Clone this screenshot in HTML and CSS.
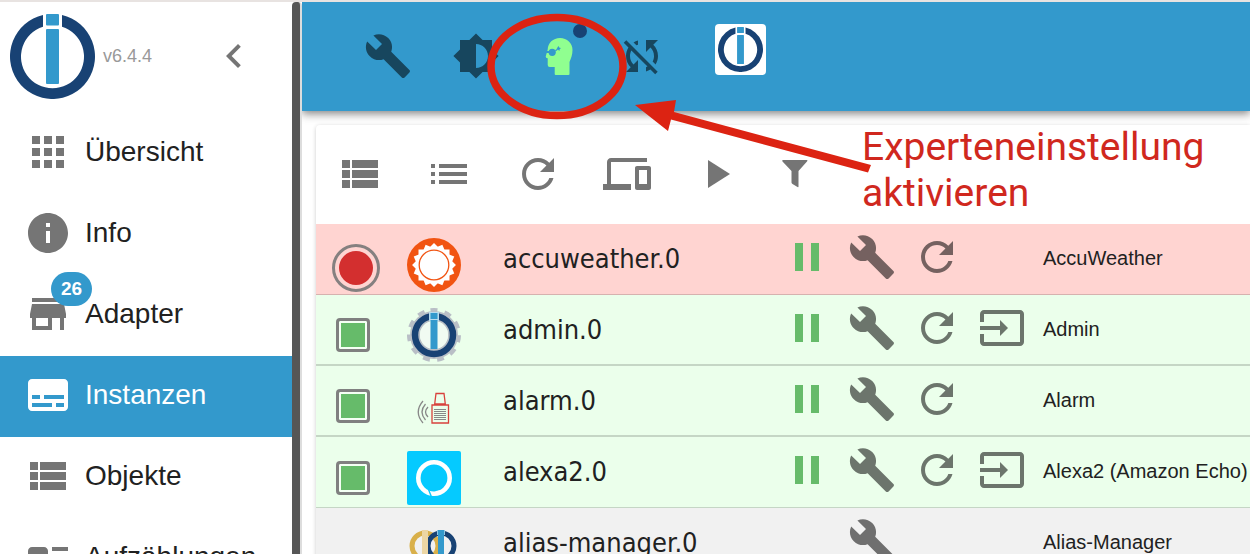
FILE: index.html
```html
<!DOCTYPE html>
<html lang="de">

<head>
    <meta charset="UTF-8">
    <meta name="viewport" content="width=device-width, initial-scale=1.0">
    <title>Instanzen - ioBroker</title>
    <link rel="stylesheet" href="styles.css">
</head>

<body>
    <!-- shared icons -->
    <svg class="sprite" aria-hidden="true">
        <symbol id="wrench" viewBox="0 0 24 24">
            <path d="M22.7 19l-9.1-9.1c.9-2.3.4-5-1.5-6.9-2-2-5-2.4-7.4-1.3L9 6 6 9 1.6 4.7C.4 7.1.9 10.1 2.9 12.1c1.9 1.9 4.6 2.4 6.9 1.5l9.1 9.1c.4.4 1 .4 1.4 0l2.3-2.3c.5-.4.5-1.1.1-1.4z" />
        </symbol>
        <symbol id="refresh" viewBox="0 0 24 24">
            <path d="M17.65 6.35C16.2 4.9 14.21 4 12 4c-4.42 0-7.99 3.58-7.99 8s3.57 8 7.99 8c3.73 0 6.84-2.55 7.73-6h-2.08c-.82 2.33-3.04 4-5.65 4-3.31 0-6-2.69-6-6s2.69-6 6-6c1.66 0 3.14.69 4.22 1.78L13 11h7V4l-2.35 2.35z" />
        </symbol>
        <symbol id="pause" viewBox="0 0 24 24">
            <path d="M6 19h4V5H6v14zm8-14v14h4V5h-4z" />
        </symbol>
        <symbol id="input" viewBox="0 0 24 24">
            <path d="M21 3.01H3c-1.1 0-2 .9-2 2V9h2V4.99h18v14.03H3V15H1v4.01c0 1.1.9 1.98 2 1.98h18c1.1 0 2-.88 2-1.98v-14c0-1.11-.9-2-2-2zM11 16l4-4-4-4v3H1v2h10v3z" />
        </symbol>
        <symbol id="view-list" viewBox="0 0 24 24">
            <path d="M3 14h4v-4H3v4zm0 5h4v-4H3v4zM3 9h4V5H3v4zm5 5h13v-4H8v4zm0 5h13v-4H8v4zM8 5v4h13V5H8z" />
        </symbol>
        <symbol id="iobroker" viewBox="0 0 85 85">
            <path fill="#184274" fill-rule="evenodd" d="M33 1.1A42.5 42.5 0 1 0 52 1.1V12.700A31.500 31.500 0 1 1 33 12.700z" />
            <rect fill="#3399cc" x="36" y="0" width="13" height="11.500" rx="1" />
            <rect fill="#3399cc" x="36" y="15" width="13" height="55" rx="1" />
        </symbol>
    </svg>

    <div class="browser-edge"></div>
    <div class="app">
        <nav class="sidebar">
            <div class="sidebar-header">
                <svg class="logo"><use href="#iobroker" /></svg>
                <span class="version">v6.4.4</span>
                <button class="icon-button collapse" aria-label="Menü einklappen">
                    <svg class="icon" viewBox="0 0 24 24"><path d="M15.41 7.41L14 6l-6 6 6 6 1.41-1.41L10.83 12z" /></svg>
                </button>
            </div>
            <a class="nav-item" href="#overview">
                <svg class="icon" viewBox="0 0 24 24"><path d="M4 8h4V4H4v4zm6 12h4v-4h-4v4zm-6 0h4v-4H4v4zm0-6h4v-4H4v4zm6 0h4v-4h-4v4zm6-10v4h4V4h-4zm-6 4h4V4h-4v4zm6 6h4v-4h-4v4zm0 6h4v-4h-4v4z" /></svg>
                Übersicht
            </a>
            <a class="nav-item" href="#info">
                <svg class="icon" viewBox="0 0 24 24"><path d="M12 2C6.480 2 2 6.480 2 12s4.480 10 10 10 10-4.480 10-10S17.520 2 12 2zm1 15h-2v-6h2v6zm0-8h-2V7h2v2z" /></svg>
                Info
            </a>
            <a class="nav-item" href="#adapter">
                <span class="badge">26</span>
                <svg class="icon" viewBox="0 0 24 24"><path d="M20 4H4v2h16V4zm1 10v-2l-1-5H4l-1 5v2h1v6h10v-6h4v6h2v-6h1zm-9 4H6v-4h6v4z" /></svg>
                Adapter
            </a>
            <a class="nav-item active" href="#instances">
                <svg class="icon" viewBox="0 0 24 24"><path d="M20 4H4c-1.1 0-2 .9-2 2v12c0 1.1.9 2 2 2h16c1.1 0 2-.9 2-2V6c0-1.1-.9-2-2-2zM4 12h4v2H4v-2zm10 6H4v-2h10v2zm6 0h-4v-2h4v2zm0-4H10v-2h10v2z" /></svg>
                Instanzen
            </a>
            <a class="nav-item" href="#objects">
                <svg class="icon"><use href="#view-list" /></svg>
                Objekte
            </a>
            <a class="nav-item" href="#enums">
                <svg class="icon" viewBox="0 0 24 24"><path d="M22 13h-8v-2h8v2zm0-6h-8v2h8V7zm-8 10h8v-2h-8v2zm-2-8v6c0 1.1-.9 2-2 2H4c-1.1 0-2-.9-2-2V9c0-1.1.9-2 2-2h6c1.1 0 2 .9 2 2zm-1.500 6l-2.250-3-1.750 2.260-1.250-1.510L3.500 15h7z" /></svg>
                Aufzählungen
            </a>
        </nav>
        <div class="divider"></div>

        <main class="content">
            <header class="appbar">
                <button class="icon-button" aria-label="Systemeinstellungen"><svg class="icon"><use href="#wrench" /></svg></button>
                <button class="icon-button" aria-label="Farbschema">
                    <svg class="icon" viewBox="0 0 24 24"><path d="M20 15.310L23.310 12 20 8.690V4h-4.690L12 .69 8.690 4H4v4.690L.69 12 4 15.310V20h4.690L12 23.310 15.310 20H20v-4.690zM12 18V6c3.310 0 6 2.690 6 6s-2.690 6-6 6z" /></svg>
                </button>
                <button class="icon-button expert" aria-label="Expertenmodus">
                    <svg class="icon" viewBox="0 0 48 48">
                        <path d="M25 6C18 6 12.900 11 12.700 17.500L10.700 24.500q-.2 1.500 2 1.800V33q0 2 2 2h5v7q0 1 1 1h12.800q1 0 1-1V30C36 26.500 37.500 23 37.500 18 37.500 11 32 6 25 6z" />
                        <circle fill="#3399cc" cx="17.200" cy="20.300" r="3.600" />
                        <path fill="#3399cc" d="M11.500 19h3v2h-3.500zM20 18.300l2-1.500.8 1-2 1.500zM22.300 15.700l1.100-1.700 1.100 1.700 1.500.4-1.300 1.200-.4 1.700-1.400-1.400-1.300-.5z" />
                    </svg>
                    <span class="dot"></span>
                </button>
                <button class="icon-button" aria-label="Synchronisierung aus">
                    <svg class="icon" viewBox="0 0 24 24"><path d="M10 6.350V4.260c-.8.21-1.550.54-2.230.96l1.460 1.460c.25-.12.5-.24.77-.33zm-7.140-.94l2.360 2.360C4.450 8.990 4 10.440 4 12c0 2.210.91 4.200 2.360 5.640L4 20h6v-6l-2.240 2.240C6.680 15.150 6 13.660 6 12c0-1 .25-1.940.68-2.770l8.080 8.080c-.25.13-.5.25-.77.34v2.090c.8-.21 1.550-.54 2.230-.96l2.360 2.360 1.270-1.270L4.140 4.140 2.860 5.410zM20 4h-6v6l2.240-2.240C17.320 8.850 18 10.340 18 12c0 1-.25 1.940-.68 2.770l1.460 1.460C19.550 15.010 20 13.560 20 12c0-2.210-.91-4.200-2.360-5.640L20 4z" /></svg>
                </button>
                <a class="host" href="#host" aria-label="Host"><svg><use href="#iobroker" /></svg></a>
            </header>

            <section class="card">
                <div class="toolbar">
                    <button class="icon-button" aria-label="Gruppiert"><svg class="icon"><use href="#view-list" /></svg></button>
                    <button class="icon-button" aria-label="Liste">
                        <svg class="icon" viewBox="0 0 24 24"><path d="M3 13h2v-2H3v2zm0 4h2v-2H3v2zm0-8h2V7H3v2zm4 4h14v-2H7v2zm0 4h14v-2H7v2zM7 7v2h14V7H7z" /></svg>
                    </button>
                    <button class="icon-button" aria-label="Neu laden"><svg class="icon"><use href="#refresh" /></svg></button>
                    <button class="icon-button" aria-label="Hosts">
                        <svg class="icon" viewBox="0 0 24 24"><path d="M4 6h18V4H4c-1.1 0-2 .9-2 2v11H0v3h14v-3H4V6zm19 2h-6c-.55 0-1 .45-1 1v10c0 .55.45 1 1 1h6c.55 0 1-.45 1-1V9c0-.55-.45-1-1-1zm-1 9h-4v-7h4v7z" /></svg>
                    </button>
                    <button class="icon-button" aria-label="Nur laufende">
                        <svg class="icon" viewBox="0 0 24 24"><path d="M8 5v14l11-7z" /></svg>
                    </button>
                    <button class="icon-button filter" aria-label="Filter">
                        <svg class="icon" viewBox="0 0 28 48"><path d="M2 10h24q1 0 0 1.500L17.500 21v15.500q0 1-1 .5L11.500 34q-1-.6-1-1.500V21L1.500 11.500Q.5 10 2 10z" /></svg>
                    </button>
                </div>

                <table class="instances">
                    <colgroup>
                        <col class="col-status">
                        <col class="col-icon">
                        <col class="col-name">
                        <col class="col-actions">
                        <col>
                    </colgroup>
                    <tbody>
                        <tr class="stopped">
                            <td class="status"><span class="state-circle"></span></td>
                            <td class="adapter-icon">
                                <svg viewBox="0 0 54 54">
                                    <circle cx="27" cy="27" r="27" fill="#f15412" />
                                    <g fill="#fff">
                                        <rect x="11.500" y="11.500" width="31" height="31" />
                                        <rect x="11.500" y="11.500" width="31" height="31" transform="rotate(22.500 27 27)" />
                                        <rect x="11.500" y="11.500" width="31" height="31" transform="rotate(45 27 27)" />
                                        <rect x="11.500" y="11.500" width="31" height="31" transform="rotate(67.500 27 27)" />
                                    </g>
                                    <circle cx="27" cy="27" r="14.800" fill="#fff" stroke="#f15412" stroke-width="1.300" />
                                </svg>
                            </td>
                            <td class="name">accuweather.0</td>
                            <td>
                                <div class="actions">
                                    <button class="icon-button run" aria-label="Anhalten"><svg class="icon"><use href="#pause" /></svg></button>
                                    <button class="icon-button" aria-label="Einstellungen"><svg class="icon"><use href="#wrench" /></svg></button>
                                    <button class="icon-button" aria-label="Neustart"><svg class="icon"><use href="#refresh" /></svg></button>
                                </div>
                            </td>
                            <td class="title">AccuWeather</td>
                        </tr>
                        <tr class="running thick">
                            <td class="status"><span class="state-square"></span></td>
                            <td class="adapter-icon">
                                <svg viewBox="0 0 54 54">
                                    <g fill="none">
                                        <circle cx="27" cy="27" r="24" stroke="#b9bfc6" stroke-width="6" stroke-dasharray="6.700 7.010" transform="rotate(-98 27 27)" />
                                        <circle cx="27" cy="27" r="19" stroke="#b9bfc6" stroke-width="10" />
                                        <circle cx="27" cy="27" r="19" stroke="#184274" stroke-width="6.500" />
                                    </g>
                                    <circle cx="27" cy="27" r="14" fill="#f1fbf2" />
                                    <rect x="22" y="4" width="10" height="9" fill="#b9dcee" />
                                    <rect x="23.500" y="5" width="7" height="6" fill="#3399cc" />
                                    <rect x="23.500" y="12" width="7" height="29" fill="#3399cc" />
                                </svg>
                            </td>
                            <td class="name">admin.0</td>
                            <td>
                                <div class="actions">
                                    <button class="icon-button run" aria-label="Anhalten"><svg class="icon"><use href="#pause" /></svg></button>
                                    <button class="icon-button" aria-label="Einstellungen"><svg class="icon"><use href="#wrench" /></svg></button>
                                    <button class="icon-button" aria-label="Neustart"><svg class="icon"><use href="#refresh" /></svg></button>
                                    <button class="icon-button" aria-label="Öffnen"><svg class="icon"><use href="#input" /></svg></button>
                                </div>
                            </td>
                            <td class="title">Admin</td>
                        </tr>
                        <tr class="running thick">
                            <td class="status"><span class="state-square"></span></td>
                            <td class="adapter-icon">
                                <svg viewBox="0 0 54 54">
                                    <g fill="none" stroke="#888" stroke-width="1.300">
                                        <path d="M16 22q-9.500 11 0 22M18.500 25q-7 8 0 16M21 28q-5 5 0 10" />
                                        <path stroke-width="1" d="M27 30.500h12M27 32.500h12M27 34.500h12M27 36.500h12M27 38.500h12M27 40.500h12" />
                                    </g>
                                    <path fill="none" stroke="#d8423c" stroke-width="1.300" d="M29 14.500h8l1.300 10.500h-10.600zM25 26h16.500v18H25z" />
                                </svg>
                            </td>
                            <td class="name">alarm.0</td>
                            <td>
                                <div class="actions">
                                    <button class="icon-button run" aria-label="Anhalten"><svg class="icon"><use href="#pause" /></svg></button>
                                    <button class="icon-button" aria-label="Einstellungen"><svg class="icon"><use href="#wrench" /></svg></button>
                                    <button class="icon-button" aria-label="Neustart"><svg class="icon"><use href="#refresh" /></svg></button>
                                </div>
                            </td>
                            <td class="title">Alarm</td>
                        </tr>
                        <tr class="running">
                            <td class="status"><span class="state-square"></span></td>
                            <td class="adapter-icon">
                                <svg viewBox="0 0 54 54">
                                    <rect width="54" height="54" rx="2" fill="#05caff" />
                                    <circle cx="27" cy="27" r="15.700" fill="none" stroke="#fff" stroke-width="4.600" />
                                    <path fill="#fff" d="M25 45l4-5 7-1.500-3 4.500z" />
                                    <path fill="#05caff" d="M22.500 39l2.500 6.500h-1.500L21 39z" />
                                </svg>
                            </td>
                            <td class="name">alexa2.0</td>
                            <td>
                                <div class="actions">
                                    <button class="icon-button run" aria-label="Anhalten"><svg class="icon"><use href="#pause" /></svg></button>
                                    <button class="icon-button" aria-label="Einstellungen"><svg class="icon"><use href="#wrench" /></svg></button>
                                    <button class="icon-button" aria-label="Neustart"><svg class="icon"><use href="#refresh" /></svg></button>
                                    <button class="icon-button" aria-label="Öffnen"><svg class="icon"><use href="#input" /></svg></button>
                                </div>
                            </td>
                            <td class="title">Alexa2 (Amazon Echo)</td>
                        </tr>
                        <tr class="disabled">
                            <td class="status"></td>
                            <td class="adapter-icon">
                                <svg viewBox="0 0 54 54">
                                    <g fill="none" stroke-width="5">
                                        <circle cx="18" cy="24" r="13" stroke="#d9b04a" />
                                        <circle cx="34" cy="24" r="13" stroke="#184274" />
                                    </g>
                                    <rect x="15" y="8" width="6" height="28" fill="#ecd6a4" />
                                    <rect x="30" y="8" width="8" height="5" fill="#8fc6e4" />
                                    <rect x="31" y="8" width="6" height="28" fill="#3399cc" />
                                </svg>
                            </td>
                            <td class="name">alias-manager.0</td>
                            <td>
                                <div class="actions">
                                    <span class="no-action"></span>
                                    <button class="icon-button" aria-label="Einstellungen"><svg class="icon"><use href="#wrench" /></svg></button>
                                </div>
                            </td>
                            <td class="title">Alias-Manager</td>
                        </tr>
                    </tbody>
                </table>
            </section>
        </main>
    </div>

    <!-- hint for the expert mode button -->
    <svg class="pointer" width="900" height="200" aria-hidden="true">
        <ellipse cx="557" cy="66.500" rx="66" ry="49" fill="none" stroke="#dc2312" stroke-width="7.500" />
        <path fill="#dc2312" d="M635 105L676 100 674 112 871 165 868 172.500 671 119.500 668 131z" />
    </svg>
    <p class="hint">Experteneinstellung<br>aktivieren</p>
</body>

</html>
```
FILE: styles.css
```css
* {
    box-sizing: border-box;
}

body {
    margin: 0;
    height: 100vh;
    overflow: hidden;
    display: flex;
    flex-direction: column;
    position: relative;
    background: #fff;
    color: #212121;
    font-family: "Liberation Sans", Arial, sans-serif;
}

.sprite {
    display: none;
}

.browser-edge {
    flex: none;
    height: 2px;
    background: #e8e3e1;
}

.app {
    flex: 1;
    min-height: 0;
    display: flex;
}

.icon {
    display: block;
    flex: none;
    width: 48px;
    height: 48px;
    fill: currentColor;
}

.icon-button {
    position: relative;
    padding: 0;
    border: none;
    background: none;
    color: rgba(0, 0, 0, 0.54);
    cursor: pointer;
}

/* sidebar */
.sidebar {
    flex: none;
    width: 292px;
    overflow: hidden;
}

.sidebar-header {
    display: flex;
    align-items: center;
    height: 111px;
    padding: 0 34px 3px 10px;
}

.logo {
    width: 85px;
    height: 85px;
}

.version {
    margin-left: 8px;
    font-size: 18px;
    color: #999;
}

.collapse {
    margin-left: auto;
}

.nav-item {
    position: relative;
    display: flex;
    align-items: center;
    gap: 13px;
    height: 81px;
    padding: 0 24px 4px;
    font-size: 28px;
    color: #212121;
    text-decoration: none;
}

.nav-item .icon {
    color: #757575;
}

.nav-item.active {
    background: #3399cc;
    color: #fff;
}

.nav-item.active .icon {
    color: #fff;
}

.badge {
    position: absolute;
    left: 51px;
    top: -3px;
    padding: 0 10px;
    border-radius: 17px;
    background: #3399cc;
    color: #fff;
    font-size: 19px;
    font-weight: bold;
    line-height: 34px;
}

.divider {
    flex: none;
    width: 10px;
    border-right: 2px solid #ddd;
    border-radius: 4px 4px 0 0;
    background: #565656;
}

/* content */
.content {
    flex: 1;
    min-width: 0;
    overflow: hidden;
}

.appbar {
    display: flex;
    align-items: center;
    gap: 40px;
    height: 109px;
    padding: 0 62px 1px;
    background: #3399cc;
    box-shadow: 0 2px 8px rgba(0, 0, 0, 0.4), 0 4px 10px rgba(0, 0, 0, 0.15);
}

.expert {
    margin: 0 -5px;
    color: #90ff90;
}

.dot {
    position: absolute;
    top: -8px;
    right: -4px;
    width: 14px;
    height: 14px;
    border-radius: 50%;
    background: #184274;
}

.host {
    margin: 0 0 14px 9px;
    padding: 3px;
    border-radius: 4px;
    background: #fff;
}

.host svg {
    display: block;
    width: 45px;
    height: 45px;
}

.card {
    margin: 14px 0 0 14px;
    border-radius: 4px 0 0 0;
    background: #fff;
    box-shadow: 0 1px 4px rgba(0, 0, 0, 0.2);
}

.toolbar {
    display: flex;
    align-items: center;
    gap: 41px;
    height: 99px;
    padding: 0 20px 1px;
}

.filter .icon {
    width: 28px;
}

.instances {
    width: 100%;
    table-layout: fixed;
    border-spacing: 0;
}

.col-status {
    width: 91px;
}

.col-icon {
    width: 96px;
}

.col-name {
    width: 280px;
}

.col-actions {
    width: 260px;
}

.instances td {
    height: 71px;
    padding: 0 0 4px;
    border-bottom: 1px solid rgba(0, 0, 0, 0.16);
    white-space: nowrap;
}

.instances .thick td {
    border-bottom-width: 2px;
}

.stopped {
    background: #ffd4d1;
}

.running {
    background: #ebffeb;
}

.disabled {
    background: #f1f1f1;
}

.instances .status,
.instances .adapter-icon {
    padding-bottom: 2px;
    vertical-align: bottom;
}

.adapter-icon svg {
    display: block;
    width: 54px;
    height: 54px;
}

.state-circle {
    display: block;
    width: 48px;
    height: 48px;
    margin-left: 16px;
    padding: 4px;
    border: 3px solid #858080;
    border-radius: 50%;
    background: #d32f2f content-box;
}

.state-square {
    display: block;
    width: 34px;
    height: 34px;
    margin: 0 0 10px 20px;
    border: 3px solid #808080;
    border-radius: 4px;
    background: #66bb6a;
    box-shadow: inset 0 0 0 2px #f4fff4;
}

.instances .name {
    padding-bottom: 1px;
    font-family: "DejaVu Sans Condensed", Tahoma, sans-serif;
    font-size: 27px;
}

.actions {
    display: flex;
    gap: 17px;
}

.run {
    color: #66bb6a;
}

.no-action {
    width: 48px;
}

.instances .title {
    padding-bottom: 1px;
    font-size: 20px;
}

/* hint */
.pointer {
    position: absolute;
    left: 0;
    top: 0;
    pointer-events: none;
}

.hint {
    position: absolute;
    left: 862px;
    top: 124px;
    margin: 0;
    color: #d0281e;
    font-family: Roboto, "Helvetica Neue", sans-serif;
    font-size: 39px;
    line-height: 46px;
}
```
